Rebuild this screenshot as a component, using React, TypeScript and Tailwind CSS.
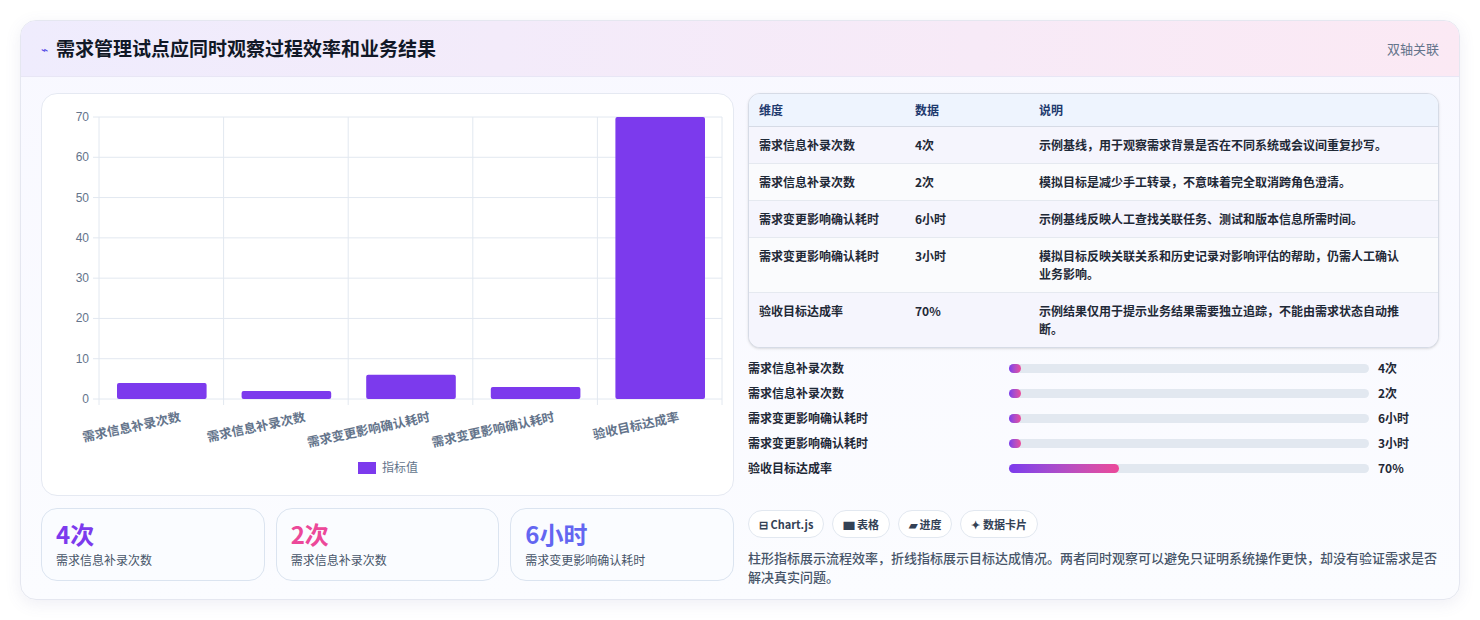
import React from "react";

const font = { fontFamily: '"Noto Sans CJK SC", "Noto Sans", sans-serif' };

const rows = [
  { k: "需求信息补录次数", v: "4次", d: "示例基线，用于观察需求背景是否在不同系统或会议间重复抄写。" },
  { k: "需求信息补录次数", v: "2次", d: "模拟目标是减少手工转录，不意味着完全取消跨角色澄清。" },
  { k: "需求变更影响确认耗时", v: "6小时", d: "示例基线反映人工查找关联任务、测试和版本信息所需时间。" },
  { k: "需求变更影响确认耗时", v: "3小时", d: "模拟目标反映关联关系和历史记录对影响评估的帮助，仍需人工确认业务影响。" },
  { k: "验收目标达成率", v: "70%", d: "示例结果仅用于提示业务结果需要独立追踪，不能由需求状态自动推断。" },
];
const vals = [4, 2, 6, 3, 70];
const barW = [12, 12, 12, 12, 110];

function Chart() {
  const x0 = 57, x1 = 680, yTop = 23, yBot = 305;
  const cw = (x1 - x0) / 5;
  const py = (v: number) => yBot - (v / 70) * (yBot - yTop);
  return (
    <svg width="693" height="403" className="block">
      {[0, 10, 20, 30, 40, 50, 60, 70].map((t) => (
        <g key={t}>
          <line x1={x0 - 6} x2={x1} y1={py(t)} y2={py(t)} stroke="#e2e8f0" />
          <text x={x0 - 10} y={py(t) + 4} textAnchor="end" fontSize="12" fill="#64748b" fontFamily="Liberation Sans, sans-serif">{t}</text>
        </g>
      ))}
      {[0, 1, 2, 3, 4, 5].map((i) => (
        <line key={i} x1={x0 + i * cw} x2={x0 + i * cw} y1={yTop} y2={yBot + 6} stroke="#e2e8f0" />
      ))}
      {vals.map((v, i) => (
        <rect key={i} x={x0 + i * cw + 18} y={py(v)} width={cw - 35} height={yBot - py(v)} fill="#7c3aed" rx="2" />
      ))}
      {rows.map((r, i) => {
        const cx = x0 + i * cw + cw / 2 + 20;
        return (
          <text key={i} x={cx} y={yBot + 22} textAnchor="end" fontSize="12.5" fill="#64748b" fontWeight="600"
            transform={`rotate(-12 ${cx} ${yBot + 22})`} style={font}>{r.k}</text>
        );
      })}
      <rect x="316" y="368" width="18" height="12" fill="#7c3aed" />
      <text x="340" y="378" fontSize="12" fill="#64748b" style={font}>指标值</text>
    </svg>
  );
}

export default function App() {
  return (
    <div className="w-[1480px] h-[620px] bg-white p-5" style={font}>
      <div className="rounded-2xl border border-[#e5e7f0] bg-gradient-to-b from-[#f8f8ff] to-[#fbfcff] shadow-[0_4px_16px_rgba(100,100,160,0.1)] overflow-hidden h-[580px]">
        <div className="h-14 flex items-center justify-between px-5 bg-gradient-to-r from-[#efecfd] to-[#fbe9f4] border-b border-[#e8e6f5]">
          <div className="flex items-center gap-2">
            <span className="text-[#4f46e5] text-xs">⌁</span>
            <h1 className="text-[19px] font-bold text-[#111827]">需求管理试点应同时观察过程效率和业务结果</h1>
          </div>
          <span className="text-[13px] text-[#64748b]">双轴关联</span>
        </div>
        <div className="flex gap-[14px] px-5 pt-[16px]">
          <div className="w-[693px] flex flex-col gap-3">
            <div className="h-[403px] rounded-2xl border border-[#e5e9f2] bg-white">
              <Chart />
            </div>
            <div className="flex gap-[11px]">
              {[
                ["4次", "需求信息补录次数", "text-[#7c3aed]"],
                ["2次", "需求信息补录次数", "text-[#ec4899]"],
                ["6小时", "需求变更影响确认耗时", "text-[#6366f1]"],
              ].map(([n, l, c], i) => (
                <div key={i} className="flex-1 h-[73px] rounded-2xl border border-[#dbe4f0] bg-[#fafcff] px-[14px] pt-[10px]">
                  <div className={`text-[24px] font-bold leading-[30px] ${c}`}>{n}</div>
                  <div className="text-[12px] text-[#475569] mt-[2px]">{l}</div>
                </div>
              ))}
            </div>
          </div>
          <div className="w-[693px] flex flex-col">
            <div className="rounded-xl border border-[#d6dbe6] overflow-hidden shadow-sm bg-[#f9fafc]">
              <div className="flex h-[33px] items-center bg-[#eef4fe] border-b border-[#d6dbe6] text-[12px] font-bold text-[#1e3a6e]">
                <div className="w-[166px] pl-[10px]">维度</div>
                <div className="w-[124px]">数据</div>
                <div className="flex-1">说明</div>
              </div>
              {rows.map((r, i) => (
                <div key={i} className={`flex py-[9px] text-[12px] font-semibold text-[#1f2937] leading-[18px] ${i < 4 ? "border-b border-[#e5e9f0]" : ""} ${i % 2 ? "bg-[#fafbfd]" : "bg-[#f5f5fd]"}`}>
                  <div className="w-[166px] pl-[10px]">{r.k}</div>
                  <div className="w-[124px]">{r.v}</div>
                  <div className="flex-1 pr-[36px]">{r.d}</div>
                </div>
              ))}
            </div>
            <div className="flex flex-col gap-[7px] mt-[11px]">
              {rows.map((r, i) => (
                <div key={i} className="flex items-center h-[18px] text-[12px] font-semibold text-[#1f2937]">
                  <div className="w-[261px]">{r.k}</div>
                  <div className="w-[360px] h-[9px] rounded-full bg-[#e2e8f0]">
                    <div className="h-full rounded-full bg-gradient-to-r from-[#7c3aed] to-[#ec4899]" style={{ width: barW[i] }} />
                  </div>
                  <div className="ml-[9px] font-bold">{r.v}</div>
                </div>
              ))}
            </div>
            <div className="flex gap-2 mt-[33px]">
              {["⊟ Chart.js", "▆ 表格", "▰ 进度", "✦ 数据卡片"].map((c) => (
                <span key={c} className="h-[28px] px-[10px] flex items-center rounded-full border border-[#e2e8f0] bg-white text-[11px] font-bold text-[#334155]">{c}</span>
              ))}
            </div>
            <p className="mt-[10px] text-[13px] leading-[19px] text-[#475569] font-medium">
              柱形指标展示流程效率，折线指标展示目标达成情况。两者同时观察可以避免只证明系统操作更快，却没有验证需求是否解决真实问题。
            </p>
          </div>
        </div>
      </div>
    </div>
  );
}
